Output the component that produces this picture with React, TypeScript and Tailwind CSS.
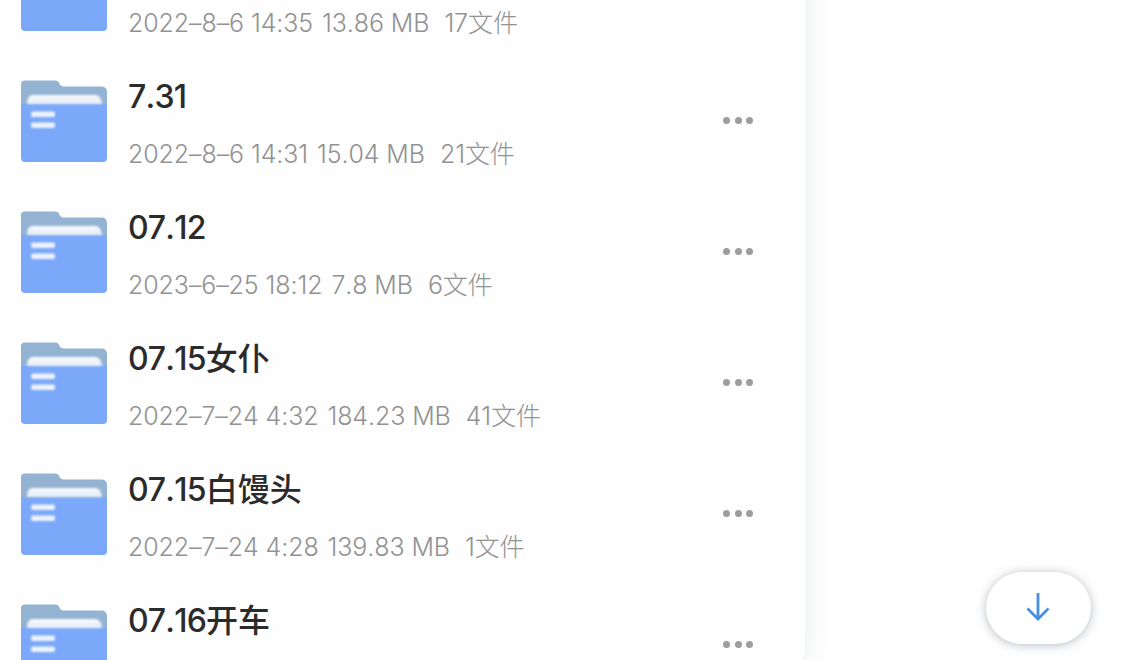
import React from 'react';

interface FolderItem {
  prefix: string;
  label?: string;
  date?: string;
  size?: string;
  count?: string;
}

const folders: FolderItem[] = [
  { prefix: '', date: '2022–8–6 14:35', size: '13.86 MB', count: '17文件' },
  { prefix: '7.31', date: '2022–8–6 14:31', size: '15.04 MB', count: '21文件' },
  { prefix: '07.12', date: '2023–6–25 18:12', size: '7.8 MB', count: '6文件' },
  { prefix: '07.15', label: '女仆', date: '2022–7–24 4:32', size: '184.23 MB', count: '41文件' },
  { prefix: '07.15', label: '白馒头', date: '2022–7–24 4:28', size: '139.83 MB', count: '1文件' },
  { prefix: '07.16', label: '开车' },
];

const FolderIcon: React.FC = () => (
  <svg className="shrink-0" width="86" height="82" viewBox="0 0 86 82" fill="none">
    <defs>
      <linearGradient id="paper" x1="0" y1="14" x2="0" y2="24" gradientUnits="userSpaceOnUse">
        <stop stopColor="#fbfcfe" />
        <stop offset="1" stopColor="#e4ecf8" />
      </linearGradient>
      <filter id="soft" x="-10%" y="-30%" width="120%" height="160%">
        <feGaussianBlur stdDeviation="0.9" />
      </filter>
    </defs>
    <path d="M4 0.5H34Q37 0.500 38 2.500Q39 6.500 43 6.500H81Q86 7 86 12V50H0V4Q0 0.500 4 0.500Z" fill="#94b3d3" />
    <path d="M0 24H86V78Q86 82 82 82H4Q0 82 0 78Z" fill="#7ba8f9" />
    <path d="M6 24Q6 15 12 15H74Q80 15 81 24Z" fill="url(#paper)" filter="url(#soft)" />
    <g fill="#edf3fd" filter="url(#soft)">
      <rect x="10" y="31.5" width="24" height="5.5" rx="2" />
      <rect x="10" y="42.5" width="24" height="5.5" rx="2" />
    </g>
  </svg>
);

const FolderRow: React.FC<{ item: FolderItem }> = ({ item }) => (
  <div className="flex h-[131px] shrink-0 items-center pl-[21px] pr-[51.6px]">
    <FolderIcon />
    <div className="ml-[21px] mt-[5px] flex flex-1 flex-col whitespace-pre [font-kerning:none]">
      <div className="h-[61px] text-[32px] font-medium leading-[44px] text-[#2b2b2b]">
        <span className="tracking-[-0.8px]">{item.prefix}</span>
        {item.label}
      </div>
      <div className="flex h-[36px] text-[25px] font-light leading-[36px] tracking-[-0.1px] text-[#929292]">
        <span className="mr-[9px]">{item.date}</span>
        <span className="mr-[15px]">{item.size}</span>
        <span>{item.count}</span>
      </div>
    </div>
    <div className="flex gap-[4.5px]">
      <span className="size-[7px] rounded-full bg-[#9d9d9d]" />
      <span className="size-[7px] rounded-full bg-[#9d9d9d]" />
      <span className="size-[7px] rounded-full bg-[#9d9d9d]" />
    </div>
  </div>
);

const App: React.FC = () => {
  return (
    <div className="relative h-[660px] w-[1130px] overflow-hidden bg-[#fefefe] font-['Inter','Noto_Sans_CJK_SC',sans-serif]">
      <div className="-mt-[76px] flex h-[745px] w-[805px] flex-col overflow-hidden rounded-br-[20px] bg-[#fefefe] shadow-[0_0_24px_rgba(80,110,125,0.12)]">
        {folders.map((item, index) => (
          <FolderRow key={index} item={item} />
        ))}
      </div>
      <button
        aria-label="Download"
        className="absolute left-[986px] top-[572px] flex h-[72px] w-[105px] items-center justify-center rounded-full bg-white shadow-[0_1px_10px_rgba(50,65,85,0.35)]"
      >
        <svg className="-mt-[2px] mr-[1px]" width="24" height="28" viewBox="0 0 24 28" fill="none" stroke="#4790df" strokeWidth="2.8">
          <path d="M12 0V26M1.5 15.500L12 26L22.5 15.500" />
        </svg>
      </button>
    </div>
  );
};

export default App;
